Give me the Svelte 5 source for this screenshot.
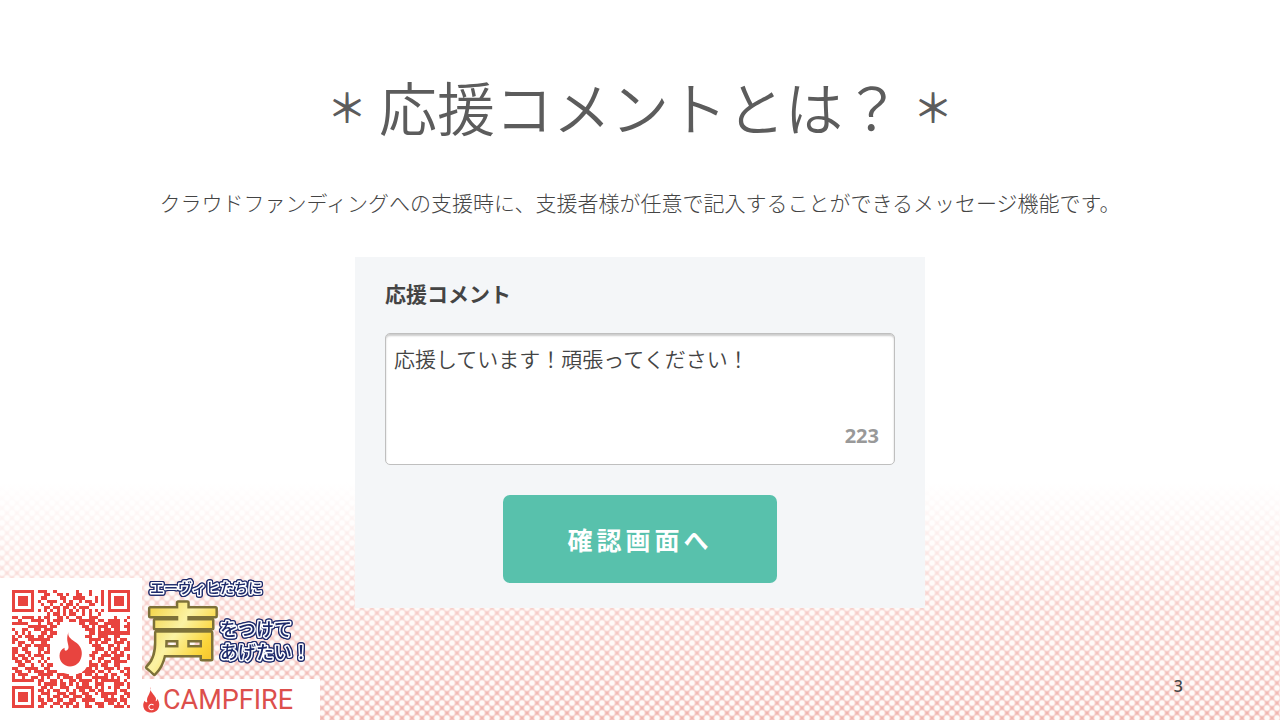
<script lang="ts">
	const MAX_LENGTH = 240;

	let comment = $state('応援しています！頑張ってください！');
	let remaining = $derived(MAX_LENGTH - comment.length);

	const QR_ROWS = [
		'1111111011100100000010001000101111111',
		'1000001000110011010011001000101000001',
		'1011101001100001100111100010101011101',
		'1011101010011100101001011010101011101',
		'1011101001001001011010001100101011101',
		'1000001000110110110101110000001000001',
		'1111111010101010101010101010101111111',
		'0000000000010110101100101001000000000',
		'1101111010110011010011001110000010001',
		'0010001111010111001101111101101111010',
		'1111100010011010000001101110011111001',
		'0000011111101100000000110101110111011',
		'1001100110111000000000011101011011001',
		'0101010001101100000000001101111111111',
		'1010111011011000000000011001110011000',
		'1100011111110000000000001111011010110',
		'1011001001100000000000001010110011101',
		'0010110111110000000000000111001101001',
		'1101100011010000000000000011101011011',
		'1100110010110000000000000110010110100',
		'1011010111000000000000001100111011101',
		'1101101001010000000000000101100111001',
		'0110110010100000000000001001011011110',
		'0011001001011000000000001110110011000',
		'1100111100110000000000011010011101011',
		'0110010111011100000000111101101000101',
		'1011100011111011110011011010010110011',
		'1001001101010010111011000111110101001',
		'1111111011001101001101111010111111010',
		'0000000010111101101010110011100011101',
		'1111111001101001110011111010101011001',
		'1000001011010110010101101101100010110',
		'1011101001110011101100110010111110011',
		'1011101010010110110111011000110100101',
		'1011101011011011001100111100011110110',
		'1000001001100110111010010011101101010',
		'1111111011001001010110011001100011101'
	];

	const qrPath = QR_ROWS.map((row, y) =>
		[...row].map((cell, x) => (cell === '1' ? `M${x} ${y}h1v1h-1z` : '')).join('')
	).join('');
</script>

<main class="slide">
	<header class="intro">
		<h1><span class="star">＊</span>応援コメントとは？<span class="star">＊</span></h1>
		<p>クラウドファンディングへの支援時に、支援者様が任意で記入することができるメッセージ機能です。</p>
	</header>

	<aside class="brand">
		<div class="qr">
			<svg viewBox="0 0 37 37" role="img" aria-label="QR">
				<path class="red" d={qrPath} shape-rendering="crispEdges" />
				<path
					class="white"
					d="M18 11C15 14 15 17 14 19C12 23 15 26 19 26C23 26 25 22 23 18C22 15 20 14 18 11Z"
				/>
				<path
					class="red"
					d="M17.7 13.2C17.4 14.5 18.2 15.3 19.7 16.2C21.4 17.2 22.2 18.9 21.8 20.8C21.4 22.9 19.9 24 18.2 24C16.3 23.8 14.9 22.5 14.9 20.6C14.9 19.4 15.5 18.5 16.5 18.1C16.3 19.1 17 19.4 17.6 18.5C18.2 17.5 16.6 16 17.7 13.2Z"
				/>
			</svg>
		</div>

		<div class="logos">
			<svg class="project" viewBox="0 0 178 101">
				<defs>
					<linearGradient id="gold" x1="0" y1="0" x2="1" y2="1">
						<stop offset="0.1" stop-color="#f3cf3a" />
						<stop offset="0.45" stop-color="#fbf3a4" />
						<stop offset="0.7" stop-color="#fbd53a" />
						<stop offset="1" stop-color="#efaa18" />
					</linearGradient>
				</defs>
				<text class="voice" x="4" y="88" font-size="74" fill="url(#gold)">声</text>
				<text class="outlined" x="8" y="15" font-size="14">エーヴィヒたちに</text>
				<text class="outlined" x="78" y="58" font-size="18">をつけて</text>
				<text class="outlined" x="78" y="81" font-size="18">あげたい！</text>
			</svg>
			<div class="campfire">
				<svg viewBox="0 0 50 76" aria-hidden="true">
					<path
						class="red"
						d="M22 0C18 12 32 20 37 31C39 35 38 39 37 42C41 41 42 37 42 34C50 46 50 60 41 69C34 76 16 78 7 69C-1 61 -1 48 5 40C7 45 10 46 13 44C7 30 25 20 22 0Z"
					/>
					<path class="letter" d="M31 53A8 8 0 1 0 31 64" />
				</svg>
				<span>CAMPFIRE</span>
			</div>
		</div>
	</aside>

	<form class="panel" onsubmit={(e) => e.preventDefault()}>
		<label for="comment">応援コメント</label>
		<div class="field">
			<textarea id="comment" maxlength={MAX_LENGTH} bind:value={comment}></textarea>
			<output for="comment">{remaining}</output>
		</div>
		<button type="submit">確認画面へ</button>
	</form>

	<footer class="page">3</footer>
</main>

<style>
	:global(body) {
		margin: 0;
	}
	.slide {
		--red: #e8443f;
		--navy: #1d2a6b;
		display: grid;
		grid-template-columns: 1fr 570px 1fr;
		grid-template-rows: auto 1fr;
		min-height: 100vh;
		background:
			linear-gradient(to bottom, #fff 67%, #fff0 84%),
			radial-gradient(circle, #fffaf8 2px, #fffaf800 4px) 7px 8px / 10px 10px,
			radial-gradient(circle, #fffaf8 2px, #fffaf800 4px) 2px 3px / 10px 10px,
			linear-gradient(to top, #f0b5af, #f6cdc9 14%, #fbe0dd 33%);
		font-family: 'Noto Sans CJK JP', sans-serif;
		color: #444;
	}
	.intro {
		grid-column: 1 / -1;
		padding-top: 66px;
		text-align: center;
		white-space: nowrap;
	}
	h1 {
		display: flex;
		align-items: center;
		justify-content: center;
		margin: 0;
		font-size: 58px;
		font-weight: 350;
		line-height: 80px;
		color: #5c5c5c;
	}
	.star {
		margin: 0 12px;
		font-size: 40px;
		font-weight: 500;
	}
	p {
		margin: 41px 0 40px;
		font-size: 21px;
		font-weight: 300;
		line-height: 30px;
	}
	.brand {
		display: flex;
		align-items: flex-end;
		align-self: end;
	}
	.qr {
		box-sizing: border-box;
		width: 142px;
		height: 142px;
		padding: 12px;
		background: #fff;
	}
	.qr svg {
		display: block;
		width: 118px;
		height: 118px;
	}
	.red {
		fill: var(--red);
	}
	.white {
		fill: #fff;
		stroke: #fff;
	}
	.logos {
		width: 178px;
	}
	.project {
		display: block;
		width: 100%;
	}
	.project text {
		font-weight: 700;
		paint-order: stroke;
		stroke-linejoin: round;
	}
	.project .outlined {
		fill: var(--navy);
		font-weight: 500;
		stroke: #fff;
		stroke-width: 3px;
		filter: drop-shadow(1px 0 var(--navy)) drop-shadow(-1px 0 var(--navy))
			drop-shadow(0 1px var(--navy)) drop-shadow(0 -1px var(--navy));
	}
	.voice {
		stroke: #7d7138;
		stroke-width: 5px;
	}
	.campfire {
		display: flex;
		align-items: center;
		gap: 3px;
		height: 41px;
		padding-left: 1px;
		background: #fff;
	}
	.campfire svg {
		width: 17px;
		height: 26px;
	}
	.campfire span {
		font-family: Roboto, sans-serif;
		font-size: 27px;
		line-height: 40px;
		color: #dc4f4c;
	}
	.letter {
		fill: none;
		stroke: #fff;
		stroke-width: 3;
	}
	.panel {
		display: flex;
		flex-direction: column;
		align-self: start;
		padding: 21px 30px 25px;
		background: #f4f6f8;
	}
	label {
		font-size: 21px;
		font-weight: 700;
		line-height: 30px;
	}
	.field {
		position: relative;
		margin: 25px 0 30px;
	}
	textarea {
		display: block;
		box-sizing: border-box;
		width: 100%;
		height: 132px;
		padding: 9px 8px;
		border: 1px solid #bfbfbf;
		border-radius: 5px;
		background: #fff;
		box-shadow: inset 0 2px 2px #ccc;
		font: 350 21px/30px 'Noto Sans CJK JP', sans-serif;
		color: #444;
		resize: none;
	}
	output {
		position: absolute;
		right: 16px;
		bottom: 15px;
		font: 700 20px/28px 'Open Sans', sans-serif;
		color: #999;
	}
	button {
		align-self: center;
		width: 274px;
		height: 88px;
		padding: 0;
		border: 0;
		border-radius: 7px;
		background: #58c1ac;
		font: 700 25px/36px 'Noto Sans CJK JP', sans-serif;
		letter-spacing: 4px;
		color: #fff;
	}
	.page {
		align-self: end;
		justify-self: end;
		padding: 0 97px 24px 0;
		font: 500 16px/20px 'Noto Sans', sans-serif;
	}
</style>
